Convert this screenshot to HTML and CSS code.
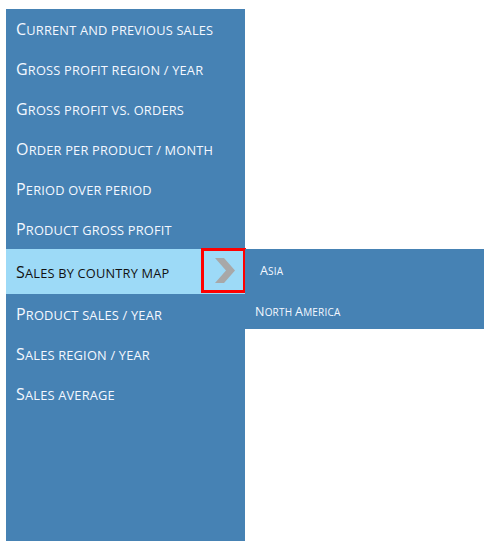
FILE: index.html
```html
<!DOCTYPE html>
<html>
<head>
<meta charset="utf-8">
<link rel="stylesheet" href="styles.css">
</head>
<body>
<nav class="sidebar">
  <div class="item"><span class="label">Current and previous sales</span></div>
  <div class="item"><span class="label">Gross profit region / year</span></div>
  <div class="item"><span class="label">Gross profit vs. orders</span></div>
  <div class="item"><span class="label">Order per product / month</span></div>
  <div class="item"><span class="label">Period over period</span></div>
  <div class="item"><span class="label">Product gross profit</span></div>
  <div class="item active">
    <span class="label">Sales by country map</span>
    <span class="arrow-box">
      <svg class="chevron" width="20" height="25" viewBox="0 0 20 25"><polygon points="0,0 9,0 20,12.5 9,25 0,25 11,12.5" fill="#a8a8a8"/></svg>
    </span>
    <div class="submenu">
      <div class="sub-item asia"><span class="cap">A</span>sia</div>
      <div class="sub-item"><span class="cap">N</span>orth <span class="cap">A</span>merica</div>
    </div>
  </div>
  <div class="item"><span class="label">Product sales / year</span></div>
  <div class="item"><span class="label">Sales region / year</span></div>
  <div class="item"><span class="label">Sales average</span></div>
</nav>
</body>
</html>
```
FILE: styles.css
```css
html, body {
  margin: 0;
  padding: 0;
  background: #ffffff;
}
body {
  padding: 9px 0 0 6px;
  font-family: "Open Sans", "DejaVu Sans", sans-serif;
}
.sidebar {
  width: 239px;
  height: 532px;
  background: #4682b4;
  display: flex;
  flex-direction: column;
}
.item {
  height: 40px;
  display: flex;
  align-items: center;
  padding: 0 0 0 10px;
  box-sizing: border-box;
  color: #f4f8ff;
  white-space: nowrap;
}
.label {
  display: block;
  font-size: 12.8px;
  text-transform: uppercase;
  letter-spacing: 0.2px;
}
.label::first-letter {
  font-size: 16px;
}
.item.active {
  height: 45px;
  position: relative;
  background: #9ddaf7;
  color: #111111;
  padding-top: 0;
}
.arrow-box {
  position: absolute;
  left: 195px;
  top: -1px;
  width: 45px;
  height: 45px;
  box-sizing: border-box;
  border: 3px solid #ff0000;
  display: flex;
  align-items: center;
  justify-content: center;
}
.chevron {
  display: block;
  margin-left: 2px;
}
.submenu {
  position: absolute;
  left: 239px;
  top: 0;
  width: 239px;
  height: 80px;
  background: #4682b4;
  display: flex;
  flex-direction: column;
}
.sub-item {
  height: 40px;
  display: block;
  line-height: 40px;
  padding: 3px 0 0 10px;
  box-sizing: border-box;
  color: #f4f8ff;
  font-size: 10px;
  text-transform: uppercase;
  letter-spacing: 0.2px;
  white-space: nowrap;
}
.sub-item .cap {
  font-size: 12.5px;
}
.sub-item.asia {
  padding-left: 15px;
  padding-top: 2px;
}
```
